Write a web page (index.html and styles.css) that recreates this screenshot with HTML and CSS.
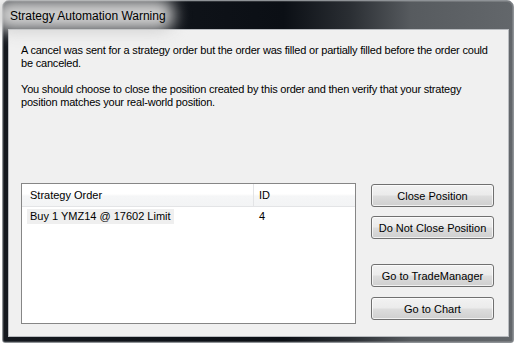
FILE: index.html
```html
<!DOCTYPE html>
<html lang="en">
<head>
    <meta charset="UTF-8">
    <title>Strategy Automation Warning</title>
    <link rel="stylesheet" href="styles.css">
</head>
<body>
    <div class="window">
        <div class="titlebar">
            <span class="title">Strategy Automation Warning</span>
        </div>
        <div class="client">
            <p>A cancel was sent for a strategy order but the order was filled or partially filled before the order could be canceled.</p>
            <p>You should choose to close the position created by this order and then verify that your strategy position matches your real-world position.</p>

            <div class="content">
                <div class="list">
                    <div class="list-head">
                        <span class="col-order">Strategy Order</span>
                        <span class="col-id">ID</span>
                    </div>
                    <div class="list-row">
                        <span class="col-order"><span class="selected">Buy 1 YMZ14 @ 17602 Limit</span></span>
                        <span class="col-id">4</span>
                    </div>
                </div>

                <div class="actions">
                    <div class="group">
                        <button>Close Position</button>
                        <button>Do Not Close Position</button>
                    </div>
                    <div class="group">
                        <button>Go to TradeManager</button>
                        <button class="last">Go to Chart</button>
                    </div>
                </div>
            </div>
        </div>
    </div>
</body>
</html>
```

FILE: styles.css
```css
body {
    margin: 0;
    background-color: #ffffff;
    font-family: 'Liberation Sans', Arial, sans-serif;
    font-size: 11px;
    color: #000;
}
.window {
    margin-left: 2px;
    width: 501px;
    padding: 0 4px 5px 5px;
    border: 1px solid #8e9296;
    border-radius: 7px 7px 3px 3px;
    background: linear-gradient(90deg, #15191f 0%, #0b0f15 55%, #2a2e33 68%, #575b5f 80%, #63676b 100%);
    box-shadow: inset 0 0 0 1px rgba(255, 255, 255, 0.15);
}
.titlebar {
    height: 28px;
    display: flex;
    align-items: center;
    position: relative;
    isolation: isolate;
}
.title {
    position: relative;
    font-family: 'Liberation Sans', Arial, sans-serif;
    font-size: 12px;
    color: #000;
    margin-left: 2px;
    margin-top: 2px;
}
.title::before {
    content: '';
    position: absolute;
    top: -10px;
    bottom: -8px;
    left: -16px;
    right: -8px;
    background: #d0d0d0;
    border-radius: 14px;
    filter: blur(8px);
    z-index: -1;
}
.client {
    height: 282px;
    padding: 14px 12px 10px 12px;
    background-color: #f0f0f0;
    border: 1px solid #b9bcc0;
}
.client p {
    margin: 0 0 13px 0;
    line-height: 13px;
    width: 472px;
    letter-spacing: -0.2px;
}
.content {
    display: flex;
    margin-top: 74px;
}
.list {
    width: 333px;
    height: 139px;
    border: 1px solid #868686;
    background-color: #fff;
}
.list-head {
    display: flex;
    height: 22px;
    align-items: center;
    background: linear-gradient(#ffffff 0%, #ffffff 45%, #f5f6f7 55%, #f3f4f5 100%);
    border-bottom: 1px solid #e3e4e6;
}
.list-head .col-order {
    width: 232px;
    height: 22px;
    line-height: 22px;
    border-right: 1px solid #e3e4e6;
}
.col-order {
    padding-left: 8px;
    box-sizing: border-box;
}
.col-id {
    padding-left: 5px;
}
.list-row {
    display: flex;
    height: 16px;
    align-items: center;
    margin-top: 1px;
}
.list-row .col-order {
    width: 232px;
    padding-left: 5px;
}
.selected {
    display: inline-block;
    background-color: #efefef;
    padding: 1px 3px 2px 3px;
}
.actions {
    margin-left: 15px;
    margin-top: 1px;
    display: flex;
    flex-direction: column;
}
.group {
    display: flex;
    flex-direction: column;
}
.group + .group {
    margin-top: 16px;
}
button {
    width: 123px;
    height: 23px;
    margin-bottom: 9px;
    font-family: 'Liberation Sans', Arial, sans-serif;
    font-size: 11px;
    color: #000;
    border: 1px solid #707070;
    border-radius: 3px;
    background: linear-gradient(#f2f2f2 0%, #ebebeb 48%, #dddddd 52%, #cfcfcf 100%);
    box-shadow: inset 0 0 0 1px rgba(255, 255, 255, 0.7);
    padding: 0;
}
button.last {
    margin-top: 1px;
}
```
